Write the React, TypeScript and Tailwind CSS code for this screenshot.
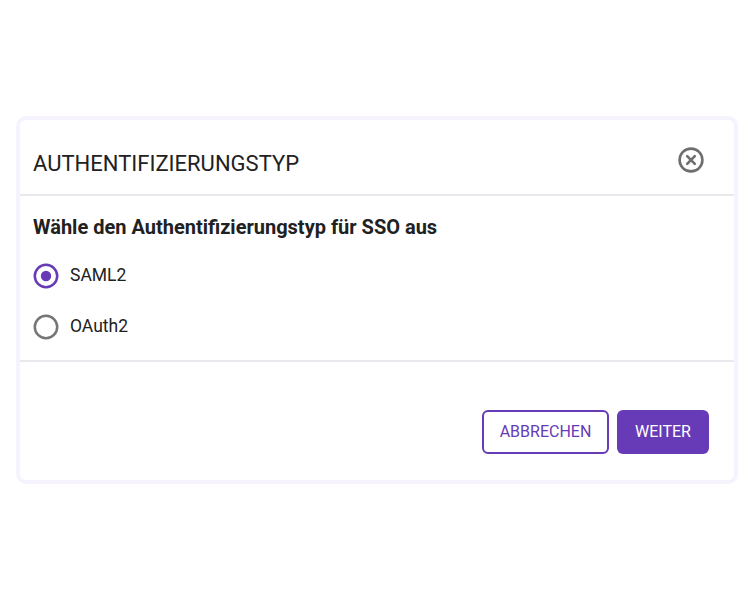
import React, { useState } from "react";

function RadioIcon({ checked }: { checked: boolean }) {
  return (
    <svg width="26" height="26" viewBox="0 0 26 26" className="shrink-0">
      <circle
        cx="13"
        cy="13"
        r="11.2"
        fill="none"
        stroke={checked ? "#673ab7" : "#757575"}
        strokeWidth="2.5"
      />
      {checked && <circle cx="13" cy="13" r="5.2" fill="#673ab7" />}
    </svg>
  );
}

function CloseIcon() {
  return (
    <svg width="28" height="28" viewBox="0 0 28 28">
      <circle cx="14" cy="14" r="11.4" fill="none" stroke="#6e6e6e" strokeWidth="2.6" />
      <path d="M10.2 10.2 L17.8 17.8 M17.8 10.2 L10.2 17.8" stroke="#6e6e6e" strokeWidth="2.6" strokeLinecap="round" />
    </svg>
  );
}

export default function App() {
  const [value, setValue] = useState("saml2");
  const options = [
    { id: "saml2", label: "SAML2" },
    { id: "oauth2", label: "OAuth2" },
  ];
  return (
    <div
      className="w-[756px] h-[600px] bg-white pt-[120px] pl-[20px]"
      style={{ fontFamily: "Roboto, 'Noto Sans', sans-serif" }}
    >
      <div className="w-[714px] h-[360px] bg-white rounded-[6px] shadow-[0_0_0_4px_#f6f3fe] flex flex-col">
        <div className="flex items-start justify-between pl-[13px] pr-[29px] pt-[30px] pb-[16px] border-b-2 border-[#e7e9ec]">
          <h2 className="text-[22px] leading-[28px] text-[#212121] font-normal">AUTHENTIFIZIERUNGSTYP</h2>
          <button className="-mt-[4px] flex items-center justify-center" aria-label="Schließen">
            <CloseIcon />
          </button>
        </div>
        <div className="px-[13px] pt-[19px] pb-[8px] border-b-2 border-[#e7e9ec]">
          <p className="text-[20px] leading-[24px] font-bold text-[#212121] mb-[11px]">
            Wähle den Authentifizierungstyp für SSO aus
          </p>
          {options.map((o) => (
            <label
              key={o.id}
              className="h-[51px] flex items-center gap-[11px] cursor-pointer"
              onClick={() => setValue(o.id)}
            >
              <RadioIcon checked={value === o.id} />
              <span className="text-[17.5px] text-[#212121]">{o.label}</span>
            </label>
          ))}
        </div>
        <div className="flex-1 flex items-end justify-end gap-[8px] pr-[25px] pb-[26px]">
          <button className="h-[44px] w-[127px] rounded-[6px] border-2 border-[#673ab7] text-[#673ab7] text-[16px] bg-white">
            ABBRECHEN
          </button>
          <button className="h-[44px] w-[92px] rounded-[6px] bg-[#673ab7] text-white text-[16px]">
            WEITER
          </button>
        </div>
      </div>
    </div>
  );
}
